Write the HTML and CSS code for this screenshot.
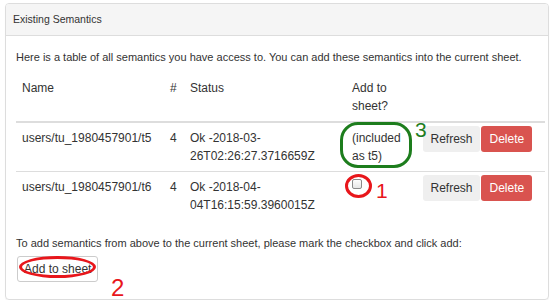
FILE: index.html
```html
<!DOCTYPE html>
<html lang="en">
<head>
    <meta charset="UTF-8">
    <title>Existing Semantics</title>
    <link rel="stylesheet" href="styles.css">
</head>
<body>
    <div class="panel">
        <div class="panel-heading">Existing Semantics</div>
        <div class="panel-body">
            <p class="intro">Here is a table of all semantics you have access to. You can add these semantics into the current sheet.</p>
            <table class="semantics">
                <thead>
                    <tr>
                        <th class="col-name">Name</th>
                        <th class="col-num">#</th>
                        <th class="col-status">Status</th>
                        <th class="col-add">Add to sheet?</th>
                        <th class="col-actions"></th>
                    </tr>
                </thead>
                <tbody>
                    <tr>
                        <td>users/tu_1980457901/t5</td>
                        <td>4</td>
                        <td>Ok -2018-03-<br>26T02:26:27.3716659Z</td>
                        <td>
                            <div class="mark">
                                (included as t5)
                                <span class="note-box green"></span>
                                <span class="note-num green-text num-3">3</span>
                            </div>
                        </td>
                        <td class="actions">
                            <button class="btn btn-default">Refresh</button>
                            <button class="btn btn-danger">Delete</button>
                        </td>
                    </tr>
                    <tr>
                        <td>users/tu_1980457901/t6</td>
                        <td>4</td>
                        <td>Ok -2018-04-<br>04T16:15:59.3960015Z</td>
                        <td>
                            <div class="mark">
                                <span class="pick"></span>
                                <span class="note-ring red"></span>
                                <span class="note-num red-text num-1">1</span>
                            </div>
                        </td>
                        <td class="actions">
                            <button class="btn btn-default">Refresh</button>
                            <button class="btn btn-danger">Delete</button>
                        </td>
                    </tr>
                </tbody>
            </table>
            <p class="hint">To add semantics from above to the current sheet, please mark the checkbox and click add:</p>
            <div class="add-wrap">
                <button class="btn btn-add">Add to sheet</button>
                <span class="note-oval red"></span>
                <span class="note-num red-text num-2">2</span>
            </div>
        </div>
    </div>
</body>
</html>
```

FILE: styles.css
```css
body {
    margin: 0;
    font-family: "Liberation Sans", Arial, sans-serif;
    color: #333;
    background: #fff;
}
.panel {
    margin: 3px 0 0 5px;
    width: 544px;
    border: 1px solid #ddd;
    border-radius: 4px;
    box-shadow: 0 1px 1px rgba(0, 0, 0, 0.05);
    box-sizing: border-box;
}
.panel-heading {
    height: 31px;
    line-height: 31px;
    padding: 0 7px;
    font-size: 10.5px;
    background-color: #f5f5f5;
    border-bottom: 1px solid #ddd;
    border-radius: 3px 3px 0 0;
}
.panel-body {
    padding: 13px 3px 17px 10px;
}
.intro {
    margin: 0;
    font-size: 11px;
    line-height: 16px;
}
.semantics {
    margin-top: 8px;
    width: 529px;
    border-collapse: collapse;
    table-layout: fixed;
    font-size: 12px;
    line-height: 18px;
}
.semantics th,
.semantics td {
    padding: 6px;
    text-align: left;
    vertical-align: top;
    font-weight: normal;
}
.semantics thead th {
    border-bottom: 2px solid #ddd;
}
.semantics tbody tr + tr td {
    border-top: 1px solid #ddd;
}
.col-name { width: 136px; }
.col-num { width: 8px; }
.col-status { width: 150px; }
.col-add { width: 59px; }
.col-actions { width: 116px; }
.semantics td.actions {
    padding-top: 3px;
    white-space: nowrap;
}
.mark {
    position: relative;
}
.pick {
    display: block;
    width: 10px;
    height: 10px;
    margin-top: 1px;
    box-sizing: border-box;
    border: 1px solid #8a8a8a;
    border-radius: 2px;
    background: linear-gradient(#fdfdfd, #e6e6e6);
}
.btn {
    height: 26px;
    padding: 0 6px;
    font-family: inherit;
    font-size: 12px;
    border-radius: 3px;
    border: 1px solid transparent;
    cursor: pointer;
    vertical-align: top;
    white-space: nowrap;
}
.btn + .btn {
    margin-left: -2px;
}
.btn-default {
    background-color: #efefef;
    color: #333;
    width: 57px;
}
.btn-danger {
    background-color: #d9534f;
    color: #fff;
    width: 51px;
}
.hint {
    margin: 15px 0 5px 0;
    font-size: 11px;
    line-height: 16px;
}
.add-wrap {
    position: relative;
    margin-left: 1px;
}
.btn-add {
    width: 81px;
    background-color: #fff;
    border-color: #ccc;
    color: #333;
}

/* hand-drawn annotations laid over the screenshot */
.note-box,
.note-ring,
.note-oval {
    position: absolute;
    box-sizing: border-box;
    border-width: 3px;
    border-style: solid;
}
.note-box {
    left: -12px;
    top: -7px;
    width: 72px;
    height: 46px;
    border-radius: 18px;
}
.note-ring {
    left: -7px;
    top: -5px;
    width: 27px;
    height: 24px;
    border-radius: 50%;
}
.note-oval {
    left: 2px;
    top: 0;
    width: 77px;
    height: 22px;
    border-radius: 50%;
}
.green { border-color: #1d7d1d; }
.red { border-color: #e8161b; }
.note-num {
    position: absolute;
    line-height: 1;
}
.green-text { color: #1d7d1d; }
.red-text { color: #e8161b; }
.num-3 {
    left: 63px;
    top: -10px;
    font-size: 21px;
}
.num-1 {
    left: 24px;
    top: 1px;
    font-size: 21px;
}
.num-2 {
    left: 94px;
    top: 20px;
    font-size: 24px;
}
```
